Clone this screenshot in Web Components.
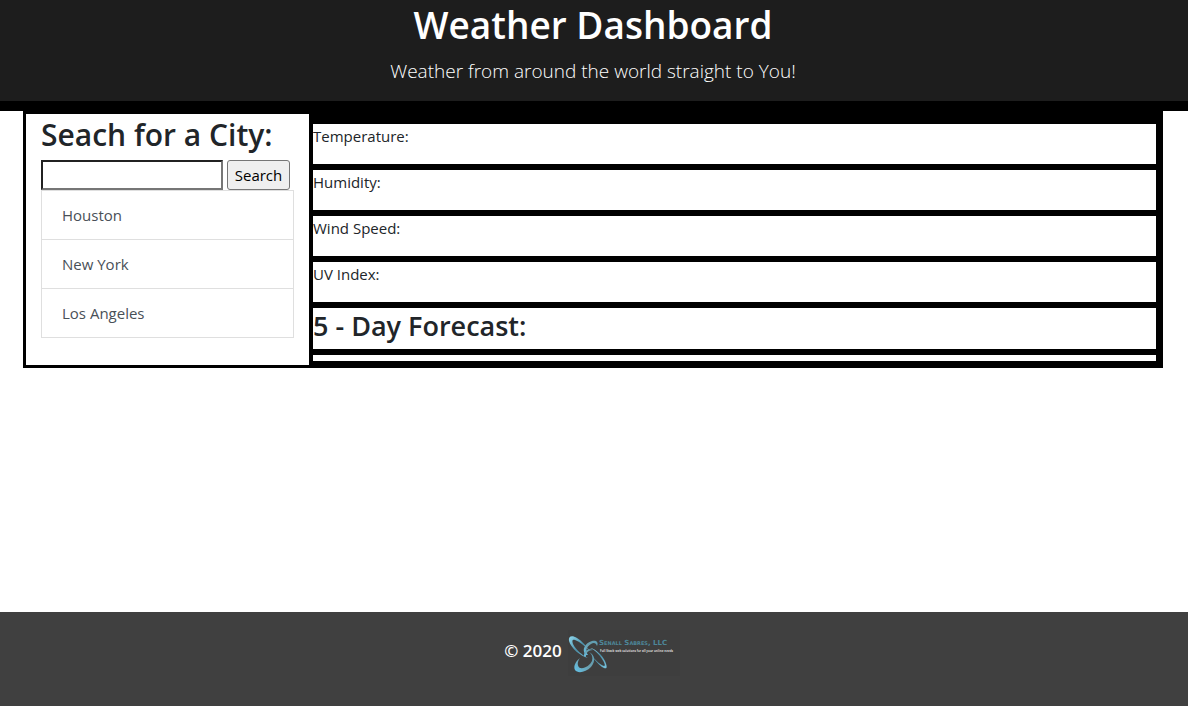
<!DOCTYPE html>
<html lang="en">
<head>
<meta charset="utf-8">
<meta name="viewport" content="width=device-width, initial-scale=1">
<title>Weather Dashboard</title>
<style>
  body {
    margin: 0;
    background: #fff;
    color: #212529;
    font: 400 15px/24px "Open Sans", "Noto Sans", sans-serif;
  }
</style>
</head>
<body>
<weather-app></weather-app>

<script>
  const define = (name, html) => {
    const template = document.createElement('template');
    template.innerHTML = '<style>*{box-sizing:border-box}:host{display:block}</style>' + html;
    customElements.define(name, class extends HTMLElement {
      constructor() {
        super();
        this.attachShadow({ mode: 'open' }).append(template.content.cloneNode(true));
      }
    });
  };

  define('page-header', `
    <style>
      header {
        padding: 0 2px 14px 0;
        background: #1d1d1d;
        border-bottom: 10px solid #000;
        color: #fff;
        text-align: center;
      }
      h1 { margin: 0; font-size: 37px; line-height: 50px; font-weight: 600; }
      p { margin: 6px 0 0; font-size: 19px; line-height: 31px; font-weight: 300; }
    </style>
    <header>
      <h1><slot name="title"></slot></h1>
      <p><slot name="lead"></slot></p>
    </header>`);

  define('city-item', `
    <style>
      :host { border: 1px solid #dfdfdf; margin-bottom: -1px; }
      a {
        display: block;
        padding: 12px 20px;
        color: #495057;
        text-decoration: none;
      }
    </style>
    <a href="#"><slot></slot></a>`);

  define('city-search', `
    <style>
      :host { background: #fff; padding: 0 15px 28px; }
      h2 { margin: 0; font-size: 30px; line-height: 42px; padding-bottom: 4px; font-weight: 600; white-space: nowrap; }
      form { display: flex; gap: 4px; }
      input, button { font: inherit; height: 30px; margin: 0; }
      input {
        width: 182px;
        min-width: 0;
        padding: 1px 2px;
        background: #fff;
        border: 2px inset #767676;
        border-radius: 0;
      }
      button {
        width: 63px;
        padding: 0;
        background: #efefef;
        border: 1px solid #767676;
        border-radius: 3px;
        color: #000;
      }
    </style>
    <h2 id="heading">Seach for a City:</h2>
    <form>
      <input type="text" aria-labelledby="heading">
      <button type="button">Search</button>
    </form>
    <nav><slot></slot></nav>`);

  define('weather-row', `
    <style>
      :host { background: #fff; }
      p { margin: 0; padding-bottom: 16px; }
    </style>
    <p><slot></slot></p>`);

  define('weather-panel', `
    <style>
      section { display: flex; flex-direction: column; gap: 6px; padding-top: 10px; }
      h3 {
        margin: 0;
        padding-bottom: 5px;
        background: #fff;
        font-size: 27px;
        line-height: 36px;
        font-weight: 600;
      }
      .forecast { height: 6px; background: #fff; }
    </style>
    <section>
      <weather-row>Temperature:</weather-row>
      <weather-row>Humidity:</weather-row>
      <weather-row>Wind Speed:</weather-row>
      <weather-row>UV Index:</weather-row>
      <h3>5 - Day Forecast:</h3>
      <div class="forecast"></div>
    </section>`);

  define('company-logo', `
    <style>
      svg { display: block; }
      .name { font: 700 7px "DejaVu Sans", sans-serif; fill: #4d8699; }
      .name .small { font-size: 5px; }
      .tag { font: 700 3px "Open Sans", sans-serif; fill: #d8d8d8; }
    </style>
    <svg width="112" height="46" viewBox="0 0 112 46" role="img" aria-label="Company logo">
      <defs>
        <linearGradient id="ring" x1="0" y1="0" x2="1" y2="1">
          <stop offset="0" stop-color="#8fd8ee"/>
          <stop offset=".5" stop-color="#4c91aa"/>
          <stop offset="1" stop-color="#7ac5e0"/>
        </linearGradient>
        <linearGradient id="sweep" x1="1" y1="0" x2="0" y2="1">
          <stop offset="0" stop-color="#5b9db4"/>
          <stop offset=".5" stop-color="#6b9fae"/>
          <stop offset="1" stop-color="#62c3ea"/>
        </linearGradient>
      </defs>
      <rect width="112" height="46" fill="#3e3e3e"/>
      <g fill="url(#ring)">
        <path d="M20 28C12 26 3 18 1 11C0 6 4 5 9 8C14 11 18 16 22 21C17 16 12 12 7 10C4 9 4 11 5 14C8 20 14 25 20 28Z"/>
        <path d="M22 18C28 19 34 25 37 31C40 38 39 40 34 37C30 34 26 29 23 25C28 31 33 35 36 36C38 36 36 32 34 29C31 24 27 20 22 18Z"/>
      </g>
      <g fill="url(#sweep)">
        <path d="M18 25C13 20 17 13 24 11C28 10 31 12 29 16C28 13 26 12 23 14C18 17 17 21 20 25Z"/>
        <path d="M21 22C27 25 28 31 23 37C18 42 10 44 7 40C5 36 8 31 12 28C9 32 9 36 12 38C17 39 22 35 24 31C25 27 24 24 21 22Z"/>
        <path d="M16 26C16 21 20 18 25 20C20 20 18 23 18 27Z"/>
      </g>
      <text class="name" x="31" y="15">S<tspan class="small">ENALL</tspan> S<tspan class="small">ABRES</tspan>, LLC</text>
      <text class="tag" x="32" y="22">Full Stack web solutions for all your online needs</text>
    </svg>`);

  define('page-footer', `
    <style>
      footer {
        display: flex;
        justify-content: center;
        gap: 6px;
        padding: 18px 4px 30px 0;
        background: #404040;
        color: #fff;
        font-size: 17px;
        font-weight: 600;
      }
      span { padding-top: 9px; }
    </style>
    <footer><span>© 2020</span><company-logo></company-logo></footer>`);

  define('weather-app', `
    <style>
      :host { display: flex; flex-direction: column; min-height: 100vh; }
      main {
        display: grid;
        grid-template-columns: 283px minmax(0, 1fr);
        gap: 4px;
        margin: 0 25px 24px 23px;
        padding: 3px 7px 3px 3px;
        background: #000;
      }
      page-footer { margin-top: auto; }
    </style>
    <page-header>
      <span slot="title">Weather Dashboard</span>
      <span slot="lead">Weather from around the world straight to You!</span>
    </page-header>
    <main>
      <city-search>
        <city-item>Houston</city-item>
        <city-item>New York</city-item>
        <city-item>Los Angeles</city-item>
      </city-search>
      <weather-panel></weather-panel>
    </main>
    <page-footer></page-footer>`);
</script>
</body>
</html>
